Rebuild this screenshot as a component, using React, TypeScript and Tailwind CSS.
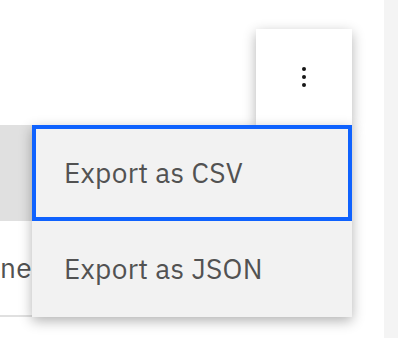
import React from "react"

const font = { fontFamily: '"IBM Plex Sans", Inter, "Noto Sans", sans-serif' }

function OverflowIcon() {
  return (
    <svg width="32" height="32" viewBox="0 0 32 32" fill="#161616">
      <circle cx="16" cy="8" r="2" />
      <circle cx="16" cy="16" r="2" />
      <circle cx="16" cy="24" r="2" />
    </svg>
  )
}

export default function App() {
  return (
    <div className="flex h-[338px] w-[398px] overflow-hidden bg-white" style={font}>
      <div className="relative flex-1 overflow-hidden">
        {/* toolbar */}
        <div className="flex h-[125px] items-end justify-end pr-[32px]">
          <div className="relative">
            <button className="flex h-[96px] w-[96px] items-center justify-center bg-white shadow-[0_4px_12px_rgba(0,0,0,0.3)]">
              <OverflowIcon />
            </button>
            {/* menu */}
            <ul className="absolute right-0 top-full z-10 w-[320px] bg-[#f2f2f2] shadow-[0_4px_12px_rgba(0,0,0,0.3)]">
              <li className="flex h-[96px] items-center border-4 border-[#0f62fe] pl-[28px] text-[28px] tracking-[0.3px] text-[#525252]">
                Export as CSV
              </li>
              <li className="flex h-[96px] items-center pl-[32px] text-[28px] tracking-[0.3px] text-[#525252]">
                Export as JSON
              </li>
            </ul>
          </div>
        </div>
        {/* table */}
        <div className="w-[340px]">
          <div className="h-[96px] bg-[#e0e0e0]" />
          <div className="flex h-[96px] items-center border-b-2 border-[#e0e0e0] text-[28px] tracking-[0.3px] text-[#525252]">
            ned
          </div>
        </div>
      </div>
      <div className="w-[14px] bg-[#f4f4f4]" />
    </div>
  )
}
